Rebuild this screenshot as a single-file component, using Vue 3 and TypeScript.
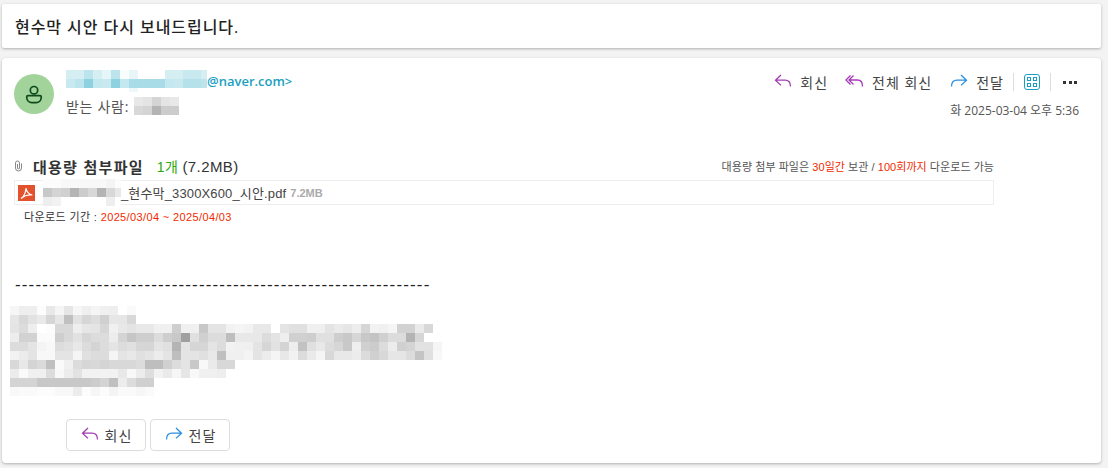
<script setup lang="ts">
// gray levels for the pixelated (redacted) regions, one hex pair per cell
const bodyRows = [
  'f6eeeefce8f5e6f6eff5f0eefffa',
  'e6d8e2e9d6e6c0e2d6ddd0e6e6d8',
  'e4dceefffcd8d8eee6e4d6f0e8e4e8e8f0f0cef0f0c8e4e4f2f5f2e8e8ffe4e0e0f0efe4eae6edd6f2f0f5d2d2ead8',
  'edd2d2fbfbced8e2d6dcdcecd4c6cecedccec8a0e0d0dcdcbee8e8e8dce4eed0d0cee0e0cec8d6c8c4d0dcdcb4d6',
  'dcdce4f4f8dce0e8dcd4dce4dce0d6d6e4e0b4e4d6d6e4dcf2f0f0e4d6e2d4eec2e0e8dcd6c8eed0ccdcecd0d4e2e2f5',
  'f2ece4f8f8e4e4f5e0dcdcf5e4e8e0e4ece4bee4e4e0e8c0f0f0f4e4ecf5e8f2dceaf5d8e8e8ecdcd0d8e6e6dcc4e0f8',
  'd8e8d4dac0faf0dcd6d8d4d8d8d8dcbebed0dce4c8f8ead8d8',
  'ecfaf0f0dcf8ece2f2f2f2f2e8f8ecdef2eaf6e6f8f0f0ee',
  'd4d4d4c8c8c8c8c8c8ccd4c0ecdcd0d0',
  'f8fafafcfcf8f8ecfcf6fcf4fafaf6fa',
]
const fileRows = ['fcfcf8f8f8f8f8f4fc', 'c8d4d0b4ccd8b4d8e8', 'eef2ffffffffffeeff']
const recipientRows = ['e8e4d4e4e8', 'd8d4b4cccc']

const senderRows = [
  'd4eef2|d4eef2|bce4ec|d4eef2|e6f5f8|bce4ec|fafdfe|e8f6fa|ffffff|ffffff|ffffff|d4eef2|d4eef2|c8e9f0|c8e9f0|d4eef2',
  'c8e9f0|bce4ec|8ed2e0|c4e8ef|c8e9f0|8ed2e0|c4e8ef|a8dde8|a8dde8|a8dde8|a8dde8|c4e8ef|c8e9f0|b4e1ea|b4e1ea|bce4ec',
]

function gray(hexRow: string) {
  return (hexRow.match(/../g) ?? []).map((h) => `#${h}${h}${h}`)
}

const actions = [
  { label: '회신', icon: 'reply' },
  { label: '전체 회신', icon: 'replyAll' },
  { label: '전달', icon: 'forward' },
]
</script>

<template>
  <div class="page">
    <header class="subject">현수막 시안 다시 보내드립니다.</header>

    <main class="message">
      <section class="head">
        <div class="avatar">
          <svg width="20" height="20" viewBox="0 0 20 20" fill="none" stroke="#0f4a1c" stroke-width="1.7">
            <circle cx="10" cy="6.2" r="3.7" />
            <path d="M2.8 12.6 Q2.8 11.6 4 11.6 H16 Q17.2 11.6 17.2 12.6 V13.8 A5 5 0 0 1 12.2 18.6 H7.8 A5 5 0 0 1 2.8 13.8 Z" />
          </svg>
        </div>

        <div class="who">
          <div class="from">
            <div class="mosaic sender">
              <div v-for="(row, r) in senderRows" :key="r" class="mosaic-row">
                <i v-for="(c, i) in row.split('|')" :key="i" :style="{ background: '#' + c }" />
              </div>
              <div class="sender-tail"><i /></div>
            </div>
            <span class="addr">@naver.com&gt;</span>
          </div>
          <div class="to">
            <span class="to-label">받는 사람:</span>
            <div class="mosaic">
              <div v-for="(row, r) in recipientRows" :key="r" class="mosaic-row">
                <i v-for="(c, i) in gray(row)" :key="i" :style="{ background: c }" />
              </div>
            </div>
          </div>
        </div>

        <div class="side">
          <div class="toolbar">
            <button v-for="a in actions" :key="a.label" class="action">
              <svg v-if="a.icon === 'reply'" class="ic" width="20" height="20" viewBox="0 0 20 20" fill="none" stroke="#a23bb5" stroke-width="1.3">
                <path d="M8 3 L2.5 8.2 L8 13.4 M2.5 8.2 H12 Q17.5 8.2 17.5 14.5" />
              </svg>
              <svg v-else-if="a.icon === 'replyAll'" class="ic" width="20" height="20" viewBox="0 0 20 20" fill="none" stroke="#a23bb5" stroke-width="1.3">
                <path d="M5.5 3.5 L1 8 L5.5 12.5 M8.5 3.5 L4 8 L8.5 12.5 M4 8 H12.5 Q17.5 8 17.5 14.5" />
              </svg>
              <svg v-else class="ic" width="20" height="20" viewBox="0 0 20 20" fill="none" stroke="#2b8fe0" stroke-width="1.3">
                <path d="M12 3 L17.5 8.2 L12 13.4 M17.5 8.2 H8 Q2.5 8.2 2.5 14.5" />
              </svg>
              <span>{{ a.label }}</span>
            </button>
            <span class="sep" />
            <span class="apps">
              <i /><i /><i /><i />
            </span>
            <span class="sep" />
            <span class="more">
              <i /><i /><i />
            </span>
          </div>
          <div class="date">화 2025-03-04 오후 5:36</div>
        </div>
      </section>

      <section class="attach">
        <div class="attach-head">
          <svg class="clip" width="9" height="12" viewBox="0 0 9 12" fill="none" stroke="#888" stroke-width="1">
            <path d="M7.5 3.5 V8 A3 3 0 0 1 1.5 8 V3 A2 2 0 0 1 5.5 3 V8 A1 1 0 0 1 3.5 8 V4" />
          </svg>
          <strong>대용량 첨부파일</strong>
          <span class="count">1개</span>
          <span class="total">(7.2MB)</span>
          <span class="notice">대용량 첨부 파일은 <em>30일간</em> 보관 / <em>100회까지</em> 다운로드 가능</span>
        </div>
        <div class="file">
          <span class="pdf">
            <svg width="17" height="16" viewBox="0 0 17 16" fill="none" stroke="#fff" stroke-width="1.2">
              <path d="M3 13.5 C5.5 12 7.5 8 8 3 C8.2 6.5 11 9.6 14.4 10 C10.5 9.6 6 11 3 13.5 Z" />
            </svg>
          </span>
          <div class="mosaic file-mosaic">
            <div v-for="(row, r) in fileRows" :key="r" class="mosaic-row">
              <i v-for="(c, i) in gray(row)" :key="i" :style="{ background: c }" />
            </div>
          </div>
          <span class="fname">_현수막_3300X600_시안.pdf</span>
          <span class="fsize">7.2MB</span>
        </div>
        <div class="period">다운로드 기간 : <em>2025/03/04 ~ 2025/04/03</em></div>
      </section>

      <section class="body">
        <div class="rule">-------------------------------------------------------------</div>
        <div class="mosaic body-mosaic">
          <div v-for="(row, r) in bodyRows" :key="r" class="mosaic-row">
            <i v-for="(c, i) in gray(row)" :key="i" :style="{ background: c }" />
          </div>
        </div>
      </section>

      <footer class="foot">
        <button class="foot-btn">
          <svg width="20" height="20" viewBox="0 0 20 20" fill="none" stroke="#a23bb5" stroke-width="1.3">
            <path d="M8 3 L2.5 8.2 L8 13.4 M2.5 8.2 H12 Q17.5 8.2 17.5 14.5" />
          </svg>
          <span>회신</span>
        </button>
        <button class="foot-btn">
          <svg width="20" height="20" viewBox="0 0 20 20" fill="none" stroke="#2b8fe0" stroke-width="1.3">
            <path d="M12 3 L17.5 8.2 L12 13.4 M17.5 8.2 H8 Q2.5 8.2 2.5 14.5" />
          </svg>
          <span>전달</span>
        </button>
      </footer>
    </main>
  </div>
</template>

<style>
html,
body {
  margin: 0;
  background: #f3f3f3;
}
</style>

<style scoped>
.page {
  width: 1108px;
  height: 468px;
  box-sizing: border-box;
  padding: 4px 7px 0 2px;
  overflow: hidden;
  font-family: "Open Sans", "Noto Sans CJK KR", sans-serif;
  color: #333;
}

.subject {
  height: 44px;
  box-sizing: border-box;
  padding: 0 13px;
  display: flex;
  align-items: center;
  background: #fff;
  border-radius: 2px;
  box-shadow: 0 1px 3px rgba(0, 0, 0, 0.28);
  font-size: 16px;
  font-weight: 500;
  letter-spacing: 0.95px;
  color: #222;
}

.message {
  margin-top: 10px;
  height: 405px;
  box-sizing: border-box;
  background: #fff;
  border-radius: 4px;
  box-shadow: 0 1px 3px rgba(0, 0, 0, 0.28);
  display: flex;
  flex-direction: column;
}

.head {
  display: flex;
  padding: 12px 22px 0 12px;
  height: 98px;
  box-sizing: border-box;
}

.avatar {
  width: 40px;
  height: 40px;
  margin-top: 4px;
  border-radius: 50%;
  background: #a1d39b;
  display: flex;
  align-items: center;
  justify-content: center;
}

.who {
  margin-left: 12px;
  flex: 1;
}

.from {
  display: flex;
  align-items: flex-start;
  height: 27px;
}

.addr {
  margin-top: 3px;
  line-height: 17px;
  font-size: 13px;
  font-weight: 600;
  color: #1b9fc0;
}

.sender {
  width: 141px;
  overflow: hidden;
}

.sender-tail {
  height: 4px;
  padding-left: 63px;
}

.sender-tail i {
  display: block;
  width: 9px;
  height: 4px;
  background: #eef8fb;
}

.to {
  display: flex;
  align-items: center;
  gap: 5px;
  font-size: 14px;
  color: #555;
  height: 18px;
}

.to-label {
  letter-spacing: 0.7px;
}

.mosaic-row {
  display: flex;
  height: 9px;
}

.mosaic-row i {
  display: block;
  flex: none;
  width: 9px;
  height: 9px;
}

.side {
  display: flex;
  flex-direction: column;
  align-items: flex-end;
}

.toolbar {
  display: flex;
  align-items: center;
  height: 24px;
}

.action {
  display: flex;
  align-items: center;
  gap: 7px;
  padding: 0;
  margin-left: 17px;
  border: 0;
  background: none;
  font: inherit;
  font-size: 14px;
  letter-spacing: 1px;
  color: #444;
}

.sep {
  width: 1px;
  height: 18px;
  margin: 0 10px;
  background: #ddd;
}

.sep:first-of-type {
  margin-left: 9px;
}

.apps {
  width: 16px;
  height: 16px;
  box-sizing: border-box;
  padding: 1.5px;
  border: 1.5px solid #1b9fc0;
  border-radius: 3px;
  display: grid;
  grid-template-columns: 4px 4px;
  grid-template-rows: 4px 4px;
  gap: 2px;
}

.apps i {
  border: 1px solid #1b9fc0;
}

.more {
  display: flex;
  justify-content: space-between;
  width: 14px;
  margin-left: 2px;
  margin-right: 2px;
}

.more i {
  width: 3px;
  height: 3px;
  background: #333;
}

.date {
  margin-top: 7px;
  font-size: 12px;
  color: #555;
}

.attach {
  padding: 0 107px 0 12px;
  font-family: "Liberation Sans", "Noto Sans CJK KR", sans-serif;
}

.attach-head {
  display: flex;
  align-items: center;
  height: 20px;
}

.clip {
  margin-right: 10px;
}

.attach-head strong {
  font-size: 15px;
  font-weight: 700;
  letter-spacing: 1.25px;
  color: #333;
}

.count {
  margin-left: 13px;
  font-size: 14px;
  letter-spacing: 0.5px;
  color: #2aa70c;
}

.total {
  margin-left: 4px;
  font-size: 15px;
  letter-spacing: 0.4px;
  color: #333;
}

.notice {
  margin-left: auto;
  font-size: 11px;
  letter-spacing: 0.05px;
  color: #555;
}

em {
  font-style: normal;
  color: #f22a00;
}

.file {
  height: 25px;
  margin-top: 4px;
  box-sizing: border-box;
  border: 1px solid #eee;
  display: flex;
  align-items: center;
  padding-left: 3px;
  font-size: 13px;
  color: #444;
}

.pdf {
  width: 17px;
  height: 16px;
  background: #e2532d;
  display: block;
  line-height: 0;
}

.file-mosaic {
  margin-left: 8px;
  width: 78px;
  overflow: hidden;
}

.fname {
  white-space: nowrap;
  letter-spacing: 0.14px;
}

.fsize {
  margin-left: 4px;
  font-size: 11px;
  font-weight: 700;
  color: #aaa;
}

.period {
  margin: 3px 0 0 10px;
  font-size: 11px;
  letter-spacing: 0.37px;
  color: #333;
}

.body {
  padding: 0 0 0 8px;
  margin-top: 54px;
}

.rule {
  margin-left: 5px;
  font-family: "Liberation Sans", sans-serif;
  font-size: 17px;
  letter-spacing: 1.15px;
  line-height: 14px;
  color: #222;
  white-space: nowrap;
}

.body-mosaic {
  margin-top: 14px;
}

.foot {
  margin-top: 23px;
  padding-left: 64px;
  display: flex;
  gap: 4px;
}

.foot-btn {
  width: 80px;
  height: 32px;
  box-sizing: border-box;
  border: 1px solid #ddd;
  border-radius: 4px;
  background: #fff;
  display: flex;
  align-items: center;
  justify-content: center;
  gap: 5px;
  padding: 0;
  font: inherit;
  font-size: 14px;
  letter-spacing: 1px;
  color: #444;
}
</style>
